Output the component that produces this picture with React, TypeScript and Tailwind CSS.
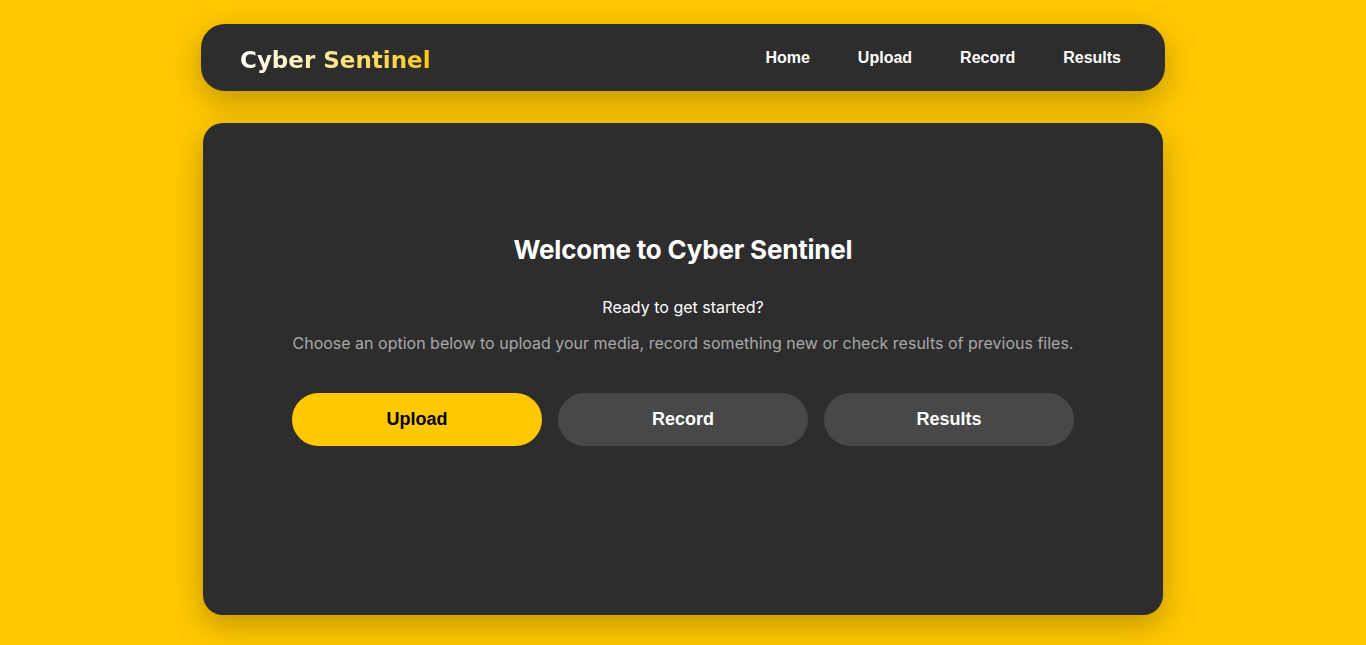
import React from "react";

export default function App() {
  return (
    <div className="min-h-[645px] w-full bg-[#ffc800] flex flex-col items-center pt-[24px]" style={{ fontFamily: "Inter, 'Liberation Sans', sans-serif" }}>
      <header className="w-[964px] h-[67px] bg-[#2d2d2d] rounded-[24px] flex items-center justify-between pl-[39px] pr-[44px] shadow-[0_10px_30px_rgba(0,0,0,0.25)]">
        <div className="text-[23px] font-bold leading-none pt-[6px]" style={{ fontFamily: "'DejaVu Sans', 'Liberation Sans', sans-serif" }}>
          <span className="bg-gradient-to-r from-[#ffffff] via-[#ffe070] via-60% to-[#ffc800] bg-clip-text text-transparent">Cyber Sentinel</span>
        </div>
        <nav className="flex items-center gap-[48px] text-white font-bold text-[16px]" style={{ fontFamily: "'Liberation Sans', Arial, sans-serif" }}>
          <a>Home</a>
          <a>Upload</a>
          <a>Record</a>
          <a>Results</a>
        </nav>
      </header>
      <main className="mt-[32px] w-[960px] h-[492px] bg-[#2d2d2d] rounded-[20px] flex flex-col items-center pt-[109px] shadow-[0_10px_30px_rgba(0,0,0,0.25)]">
        <h1 className="text-white text-[26px] font-bold leading-[36px] tracking-[-0.2px]">Welcome to Cyber Sentinel</h1>
        <p className="text-white text-[16px] mt-[27px] leading-[24px]">Ready to get started?</p>
        <p className="text-[#a8a8a8] text-[16px] mt-[12px] leading-[24px]">Choose an option below to upload your media, record something new or check results of previous files.</p>
        <div className="flex gap-[16px] mt-[38px]" style={{ fontFamily: "'Liberation Sans', Arial, sans-serif" }}>
          <button className="w-[250px] h-[53px] rounded-full bg-[#ffc800] text-black font-bold text-[18px]">Upload</button>
          <button className="w-[250px] h-[53px] rounded-full bg-[#484848] text-white font-bold text-[18px]">Record</button>
          <button className="w-[250px] h-[53px] rounded-full bg-[#484848] text-white font-bold text-[18px]">Results</button>
        </div>
      </main>
    </div>
  );
}
